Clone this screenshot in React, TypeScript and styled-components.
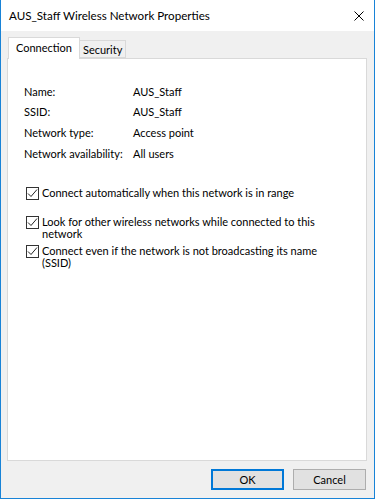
import React from 'react'
import styled, { createGlobalStyle } from "styled-components"

const GlobalStyle = createGlobalStyle`
    html, body {
        margin:0;
        padding:0;
        background:#ffffff;
    }
    body {
        font-family: Lato, "Noto Sans", "Liberation Sans", sans-serif;
        font-size:11px;
        color:#000000;
    }
`

const WWindow = styled.div`
    box-sizing:border-box;
    width:375px;
    height:499px;
    border:1px solid #1883d7;
    border-top:none;
    display:flex;
    flex-direction:column;
    background:#f0f0f0;
`

const WTitleBar = styled.div`
    height:31px;
    flex:none;
    background:#ffffff;
    display:flex;
    align-items:center;
    justify-content:space-between;
    padding-left:8px;
    padding-right:10px;
`

const WTitle = styled.span`
    font-size:11.6px;
    white-space:nowrap;
`

const WCloseButton = styled.div`
    width:10px;
    height:10px;
    display:flex;
`

const WBody = styled.div`
    flex:1;
    display:flex;
    flex-direction:column;
    padding:6px 7px 8px 6px;
    min-height:0;
`

const WTabStrip = styled.div`
    display:flex;
    align-items:flex-end;
    height:21px;
    padding-left:1px;
    position:relative;
    z-index:1;
`

const WTab = styled.div<{ $active?: boolean }>`
    box-sizing:border-box;
    height:${p => p.$active ? "22px" : "18px"};
    padding:${p => p.$active ? "0 7px 2px 7px" : "0 3px 0 3px"};
    background:${p => p.$active ? "#ffffff" : "#f0f0f0"};
    border:1px solid #d9d9d9;
    border-bottom:${p => p.$active ? "none" : "1px solid #d9d9d9"};
    margin-left:${p => p.$active ? "0" : "-1px"};
    margin-bottom:${p => p.$active ? "-1px" : "0"};
    display:flex;
    align-items:center;
    white-space:nowrap;
`

const WPanel = styled.div`
    flex:1;
    background:#ffffff;
    border:1px solid #d9d9d9;
    padding:22px 16px 0 16px;
`

const WInfoGrid = styled.div`
    display:grid;
    grid-template-columns:109px 1fr;
    grid-auto-rows:20.67px;
    align-items:center;
    white-space:nowrap;
`

const WCheckList = styled.div`
    display:grid;
    grid-auto-rows:29px;
    margin-top:23px;
    padding-left:2px;
`

const WCheckRow = styled.div`
    display:flex;
    align-items:flex-start;
    gap:3px;
`

const WCheckBox = styled.div`
    box-sizing:border-box;
    width:13px;
    height:13px;
    flex:none;
    border:1px solid #333333;
    background:#ffffff;
    display:flex;
    align-items:center;
    justify-content:center;
`

const WCheckText = styled.span`
    line-height:12px;
    white-space:nowrap;
`

const WFooter = styled.div`
    display:flex;
    justify-content:flex-end;
    gap:9px;
    padding-top:8px;
    padding-right:1px;
`

const WButton = styled.div<{ $default?: boolean }>`
    box-sizing:border-box;
    width:73px;
    height:21px;
    background:#e1e1e1;
    border:${p => p.$default ? "2px solid #0078d7" : "1px solid #adadad"};
    display:flex;
    align-items:center;
    justify-content:center;
`

const infoRows = [
    ["Name:", "AUS_Staff"],
    ["SSID:", "AUS_Staff"],
    ["Network type:", "Access point"],
    ["Network availability:", "All users"],
]

const CheckMark = () => (
    <svg width="11" height="11" viewBox="0 0 11 11">
        <polyline points="1,5.5 4,8.5 10,1.5" fill="none" stroke="#222222" strokeWidth="1" />
    </svg>
)

export default function App() {
    return (
        <>
            <GlobalStyle />
            <WWindow>
                <WTitleBar>
                    <WTitle>AUS_Staff Wireless Network Properties</WTitle>
                    <WCloseButton>
                        <svg width="10" height="10" viewBox="0 0 10 10">
                            <path d="M0.5 0.5 L9.5 9.5 M9.5 0.5 L0.5 9.5" stroke="#000000" strokeWidth="1" />
                        </svg>
                    </WCloseButton>
                </WTitleBar>
                <WBody>
                    <WTabStrip>
                        <WTab $active>Connection</WTab>
                        <WTab>Security</WTab>
                    </WTabStrip>
                    <WPanel>
                        <WInfoGrid>
                            {infoRows.map(([label, value]) => (
                                <React.Fragment key={label}>
                                    <span>{label}</span>
                                    <span>{value}</span>
                                </React.Fragment>
                            ))}
                        </WInfoGrid>
                        <WCheckList>
                            <WCheckRow>
                                <WCheckBox><CheckMark /></WCheckBox>
                                <WCheckText>Connect automatically when this network is in range</WCheckText>
                            </WCheckRow>
                            <WCheckRow>
                                <WCheckBox><CheckMark /></WCheckBox>
                                <WCheckText>Look for other wireless networks while connected to this<br />network</WCheckText>
                            </WCheckRow>
                            <WCheckRow>
                                <WCheckBox><CheckMark /></WCheckBox>
                                <WCheckText>Connect even if the network is not broadcasting its name<br />(SSID)</WCheckText>
                            </WCheckRow>
                        </WCheckList>
                    </WPanel>
                    <WFooter>
                        <WButton $default>OK</WButton>
                        <WButton>Cancel</WButton>
                    </WFooter>
                </WBody>
            </WWindow>
        </>
    )
}
